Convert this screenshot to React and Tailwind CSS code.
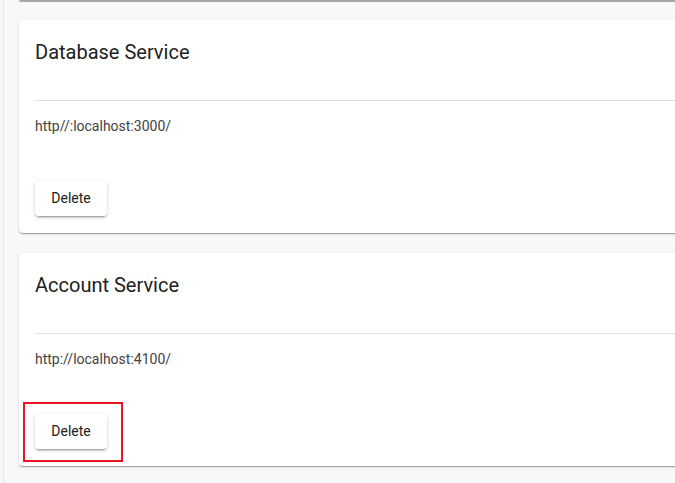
import { useState } from "react";

const services = [
  { id: 1, name: "Database Service", url: "http//:localhost:3000/" },
  { id: 2, name: "Account Service", url: "http://localhost:4100/", highlight: true },
];

function ServiceCard({ service }) {
  return (
    <div className="relative ml-[15px] w-[680px] rounded-[4px] bg-white shadow-[0_2px_1px_-1px_rgba(0,0,0,0.2),0_1px_1px_0_rgba(0,0,0,0.14),0_1px_3px_0_rgba(0,0,0,0.12)]">
      <div className="h-[80px] px-4 pt-4">
        <h2 className="text-[20px] leading-[32px] font-normal text-[#212121]">{service.name}</h2>
      </div>
      <div className="ml-4 border-t border-[#e0e0e0]" />
      <div className="px-4 pt-[15px] text-[14px] leading-[20px] text-[#424242]">{service.url}</div>
      <div className="px-4 pt-[45px] pb-[17px]">
        <button className="h-[35px] w-[72px] rounded-[4px] bg-white text-[14px] font-normal text-[#212121] shadow-[0_3px_1px_-2px_rgba(0,0,0,0.2),0_2px_2px_0_rgba(0,0,0,0.14),0_1px_5px_0_rgba(0,0,0,0.12)]">
          Delete
        </button>
      </div>
      {service.highlight && (
        <div className="pointer-events-none absolute left-[4px] top-[149px] h-[60px] w-[100px] border-2 border-[#e8141f]" />
      )}
    </div>
  );
}

export default function App() {
  const [items] = useState(services);
  return (
    <div className="h-[483px] w-[675px] overflow-hidden bg-[#f8f8f8] font-['Roboto',sans-serif]">
      <div className="ml-[3px] h-full border-l border-[#e6e6e6]">
        <div className="ml-[15px] h-[2px] w-[680px] rounded-b-[4px] bg-[#a6a6a6]" />
        <div className="flex flex-col gap-5 pt-[18px]">
          {items.map((s) => (
            <ServiceCard key={s.id} service={s} />
          ))}
        </div>
      </div>
    </div>
  );
}
